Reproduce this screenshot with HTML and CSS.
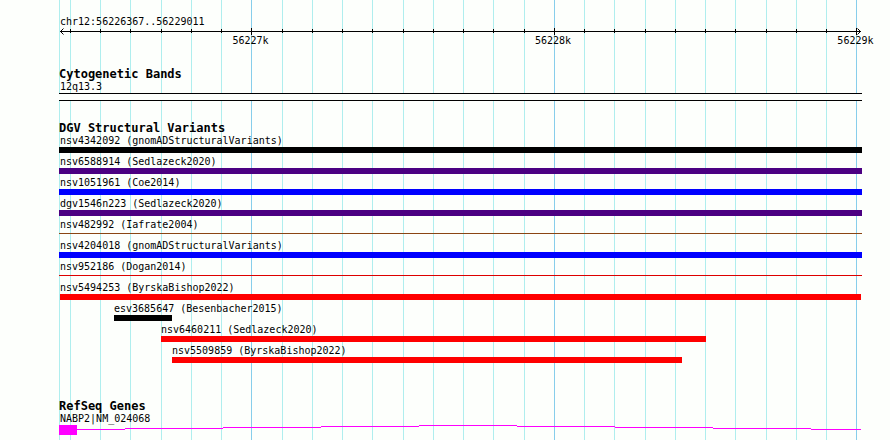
FILE: index.html
```
<!DOCTYPE html>
<html lang="en">
<head>
    <meta charset="UTF-8">
    <meta name="viewport" content="width=device-width, initial-scale=1.0">
    <title>chr12:56226367..56229011</title>
    <link rel="stylesheet" href="styles.css">
</head>
<body>
    <main class="panel">
        <div class="grid" id="grid"></div>

        <!-- scale -->
        <section class="scale">
            <div class="label">chr12:56226367..56229011</div>
            <div class="axis" id="axis">
                <svg class="arrow arrow-left" width="4" height="7" viewBox="0 0 4 7"><path d="M3.5 0.5L0.5 3.5L3.5 6.5"/></svg>
                <svg class="arrow arrow-right" width="4" height="7" viewBox="0 0 4 7"><path d="M0.5 0.5L3.5 3.5L0.5 6.5M0 3.5H4"/></svg>
            </div>
        </section>

        <section class="track cytoband">
            <h2>Cytogenetic Bands</h2>
            <div class="feature clipped">
                <div class="label">12q13.3</div>
                <div class="band"></div>
            </div>
        </section>

        <section class="track variants">
            <h2>DGV Structural Variants</h2>
            <div class="feature clipped">
                <div class="label">nsv4342092 (gnomADStructuralVariants)</div>
                <div class="bar black"></div>
            </div>
            <div class="feature clipped">
                <div class="label">nsv6588914 (Sedlazeck2020)</div>
                <div class="bar indigo"></div>
            </div>
            <div class="feature clipped">
                <div class="label">nsv1051961 (Coe2014)</div>
                <div class="bar blue"></div>
            </div>
            <div class="feature clipped">
                <div class="label">dgv1546n223 (Sedlazeck2020)</div>
                <div class="bar indigo"></div>
            </div>
            <div class="feature clipped">
                <div class="label">nsv482992 (Iafrate2004)</div>
                <div class="bar thin brown"></div>
            </div>
            <div class="feature clipped">
                <div class="label">nsv4204018 (gnomADStructuralVariants)</div>
                <div class="bar blue"></div>
            </div>
            <div class="feature clipped">
                <div class="label">nsv952186 (Dogan2014)</div>
                <div class="bar thin dark-red"></div>
            </div>
            <div class="feature" style="width: 100.125%">
                <div class="label">nsv5494253 (ByrskaBishop2022)</div>
                <div class="bar red"></div>
            </div>
            <div class="feature" style="margin-left: 6.75%; width: 7.25%">
                <div class="label">esv3685647 (Besenbacher2015)</div>
                <div class="bar black"></div>
            </div>
            <div class="feature" style="margin-left: 12.625%; width: 68.125%">
                <div class="label">nsv6460211 (Sedlazeck2020)</div>
                <div class="bar red"></div>
            </div>
            <div class="feature" style="margin-left: 14%; width: 63.75%">
                <div class="label">nsv5509859 (ByrskaBishop2022)</div>
                <div class="bar red"></div>
            </div>
        </section>

        <section class="track genes">
            <h2>RefSeq Genes</h2>
            <div class="feature clipped">
                <div class="label">NABP2|NM_024068</div>
                <div class="gene">
                    <div class="exon"></div>
                    <svg class="intron" viewBox="0 0 784 10" preserveAspectRatio="none">
                        <path d="M0 4h48v1H0zM48 3h98v1h-98zM146 2h98v1h-98zM244 1h98v1h-98zM342 0h98v1h-98zM440 1h98v1h-98zM538 2h98v1h-98zM636 3h98v1h-98zM734 4h50v1h-50z"/>
                    </svg>
                </div>
            </div>
        </section>
    </main>

    <script src="script.js"></script>
</body>
</html>
```

FILE: styles.css
```
body {
    margin: 0;
    background: #fdfffc;
    color: #000;
    font-family: "DejaVu Sans Mono", "Liberation Mono", monospace;
    font-size: 10px;
    line-height: 12px;
}

.panel {
    position: relative;
    padding: 15px 30px 5px 60px;
    overflow: hidden;
}

/* vertical guide lines behind the tracks */
.grid {
    position: absolute;
    top: 0;
    bottom: 0;
    left: 60px;
    right: 30px;
    z-index: -1;
}
.grid-line {
    position: absolute;
    top: 0;
    bottom: 0;
    width: 1px;
    background: #afeeee;
}
.grid-line.major {
    background: #87ceeb;
}
.grid-line.start {
    left: -1px;
}

.label {
    height: 13px;
    line-height: 14px;
    white-space: nowrap;
}

h2 {
    margin: 0;
    margin-left: -1px;
    font-size: 12px;
    font-weight: bold;
    line-height: 12px;
}

/* scale */
.scale .label {
    height: 16px;
}
.axis {
    position: relative;
    height: 36px;
    border-top: 1px solid #000;
}
.tick {
    position: absolute;
    top: -3px;
    width: 1px;
    height: 4px;
    background: #000;
}
.tick.major {
    top: -4px;
    height: 7px;
}
.tick span {
    position: absolute;
    top: 7px;
    left: -19px;
}
.arrow {
    position: absolute;
    top: -4px;
    fill: none;
    stroke: #000;
}
.arrow-left {
    left: 0;
}
.arrow-right {
    right: -1px;
}

/* features */
.feature + .feature {
    margin-top: 2px;
}
.clipped {
    margin-left: -1px;
    margin-right: -2px;
}
.clipped .label {
    padding-left: 1px;
}
.bar {
    height: 6px;
}
.bar.thin {
    height: 1px;
    border: solid transparent;
    border-width: 2px 0 3px;
    background-clip: padding-box;
}
.black {
    background-color: #000;
}
.indigo {
    background-color: #4b0082;
}
.blue {
    background-color: #00f;
}
.brown {
    background-color: #8b4513;
}
.dark-red {
    background-color: #d00;
}
.red {
    background-color: #f00;
}

.band {
    height: 6px;
    border: solid #000;
    border-width: 1px 0;
    background: #fdfffc;
}
.variants {
    margin-top: 21px;
}
.genes {
    margin-top: 37px;
}

.gene {
    display: flex;
    height: 10px;
}
.exon {
    width: 18px;
    background: #f0f;
}
.intron {
    flex: 1;
    min-width: 0;
    height: 10px;
    margin-right: 1px;
    fill: #f0f;
    shape-rendering: crispEdges;
}
```

FILE: script.js
```
const start = 56226367;
const end = 56229011;
const grid = document.getElementById('grid');
const axis = document.getElementById('axis');

// line at the left edge of the region
const first = document.createElement('div');
first.className = 'grid-line start';
grid.appendChild(first);

for (let pos = 56226400; pos <= end; pos += 100) {
    const left = (pos - start) / (end - start + 1) * 100 + '%';
    const major = pos % 1000 === 0;

    const line = document.createElement('div');
    line.className = major ? 'grid-line major' : 'grid-line';
    line.style.left = left;
    grid.appendChild(line);

    const tick = document.createElement('div');
    tick.className = major ? 'tick major' : 'tick';
    tick.style.left = left;
    if (major) {
        const text = document.createElement('span');
        text.textContent = pos / 1000 + 'k';
        tick.appendChild(text);
    }
    axis.appendChild(tick);
}
```
